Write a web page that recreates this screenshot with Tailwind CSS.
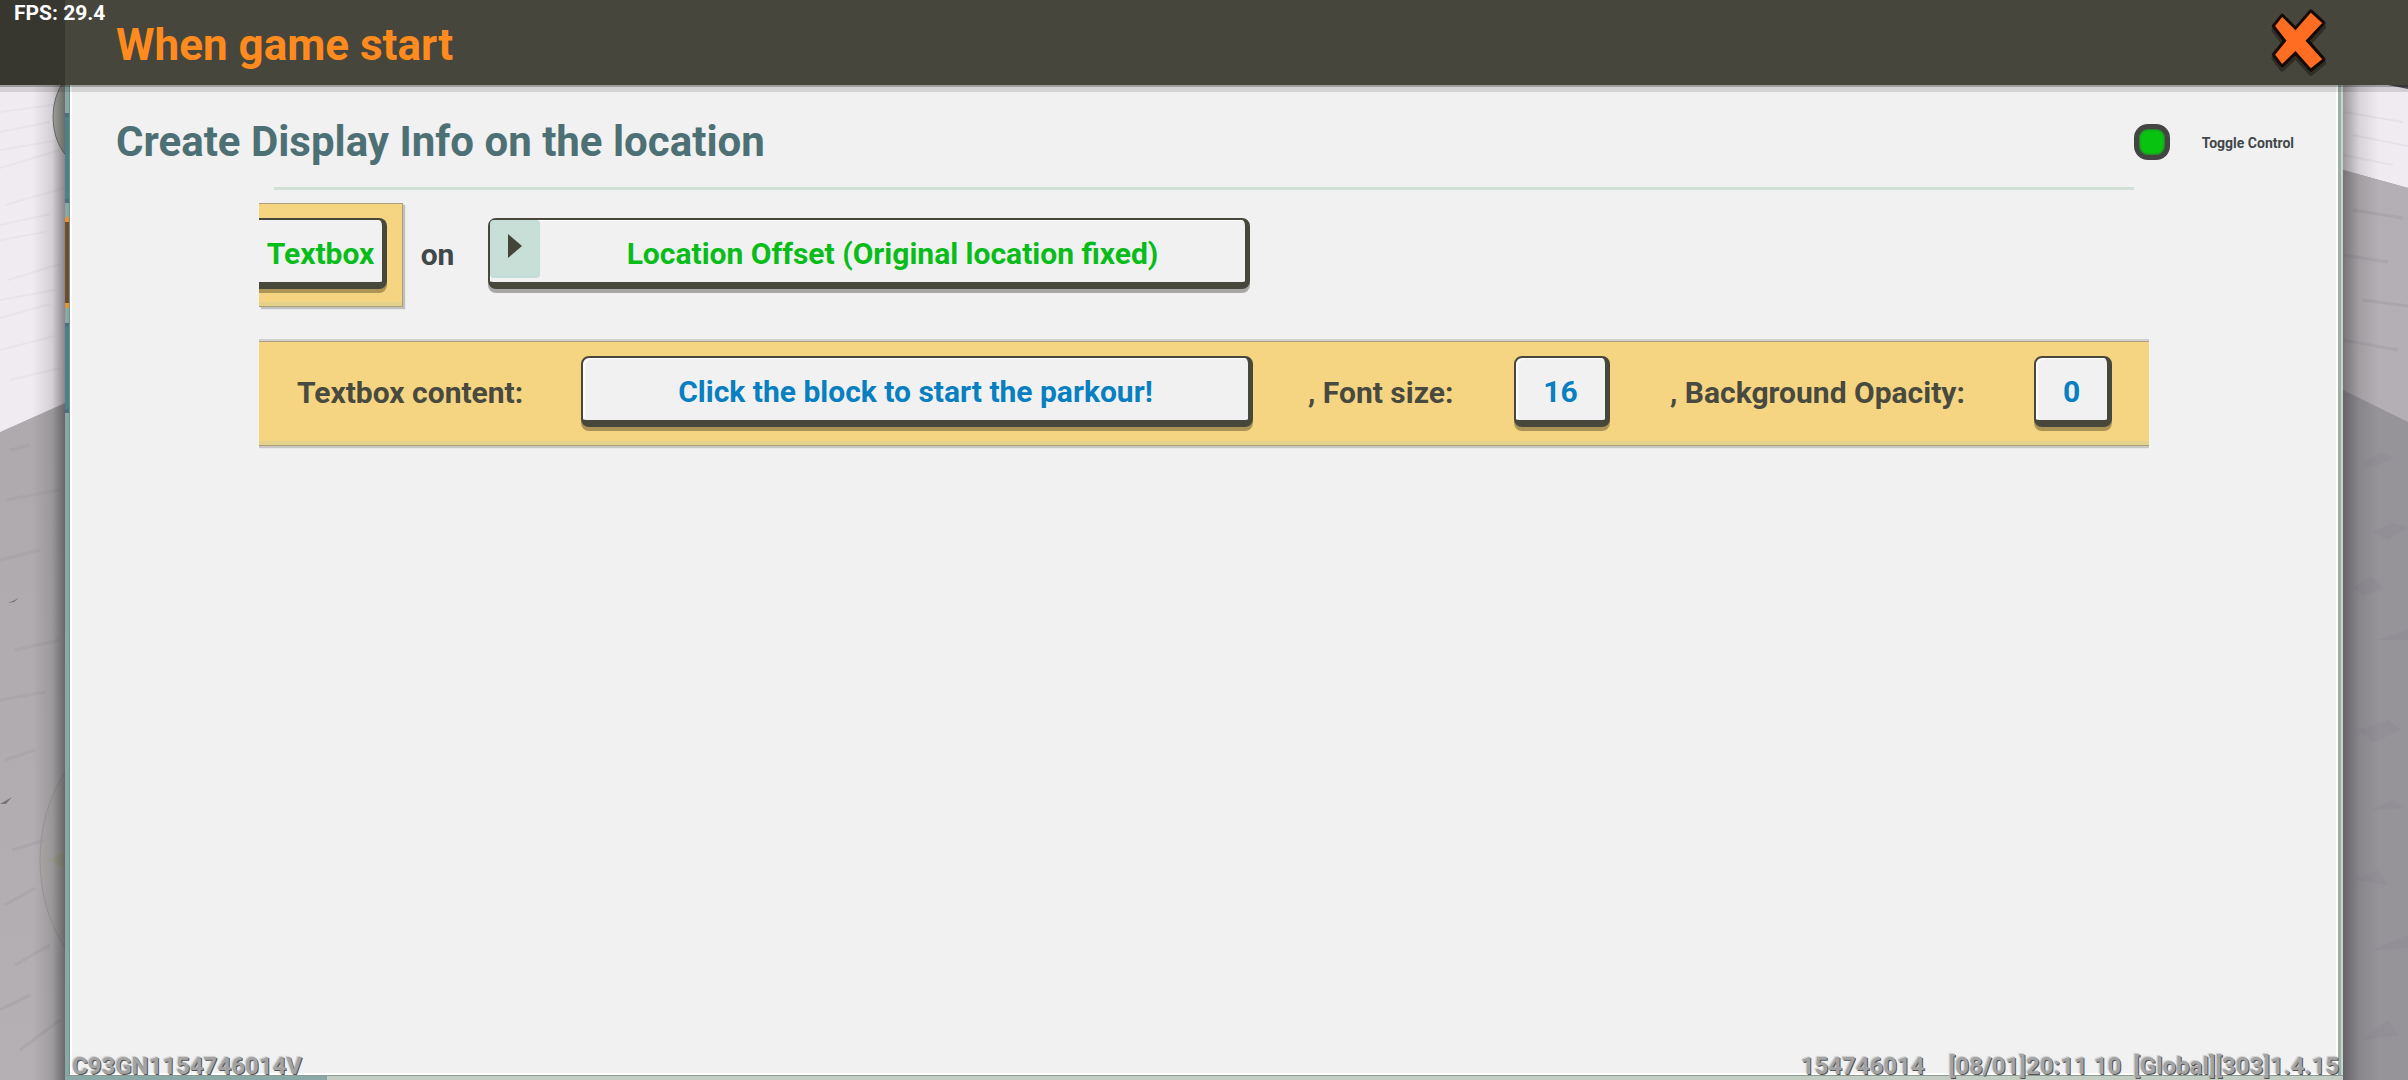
<!DOCTYPE html>
<html lang="en">
<head>
  <meta charset="UTF-8" />
  <meta name="viewport" content="width=device-width, initial-scale=1.0"/>
  <title>When game start</title>
  <script src="https://cdn.jsdelivr.net/npm/@tailwindcss/browser@4"></script>
</head>
<body class="bg-[#8f8d92] font-[Roboto,sans-serif] font-bold text-[#42474a]">
  <div class="relative min-h-screen flex flex-col">

    <!-- Title bar -->
    <header class="relative z-10 flex h-[85px] bg-[#47463c] shadow-[0_2px_0_rgba(0,0,0,0.25),0_7px_0_rgba(0,0,0,0.12)]">
      <div class="w-[65px] bg-[#37362f]"></div>
      <h1 class="flex-1 pl-[51px] pt-[17px] text-[44px] leading-[56px] text-[#ff8a1e]">When game start</h1>
      <button aria-label="Close" class="mr-[82px] mt-[7px] w-[54px] h-[70px] cursor-pointer">
        <svg viewBox="517 20 161 210" class="w-full h-full overflow-visible">
          <path d="M547 57L587 97L633 42L672 80L624 133L672 188L633 219L587 169L547 207L522 175L555 133L522 90Z" fill="#000" opacity=".35" stroke="#000" stroke-width="14" stroke-linejoin="round"/>
          <path d="M547 46L587 86L633 33L671 68L622 121L671 177L633 208L587 156L547 195L522 163L556 121L522 77Z" fill="#ff6d22" stroke="#160b04" stroke-width="12" stroke-linejoin="round"/>
          <path d="M547 50L587 90L633 37L667 68L617 121L667 177L633 204L587 152L547 191L526 163L560 121L526 77Z" fill="#ff6d22"/>
        </svg>
      </button>
      <p class="absolute left-[14px] top-0 text-[21px] leading-[26px] text-white">FPS: 29.4</p>
    </header>

    <main class="flex flex-1">
      <!-- Scenery, left -->
      <div class="w-[65px] shrink-0">
        <svg viewBox="0 85 65 995" preserveAspectRatio="none" class="w-full h-full">
          <defs>
            <linearGradient id="shadeLeft"><stop offset=".5" stop-color="#222" stop-opacity="0"/><stop offset=".8" stop-color="#222" stop-opacity=".14"/><stop offset="1" stop-color="#222" stop-opacity=".5"/></linearGradient>
            <linearGradient id="rock" x1="0" y1="0" x2="0" y2="1"><stop offset="0" stop-color="#aaa6aa"/><stop offset="1" stop-color="#b4b0b4"/></linearGradient>
          </defs>
          <rect y="85" width="65" height="995" fill="url(#rock)"/>
          <path d="M0 85H65V403L0 432Z" fill="#f0ebf1"/>
          <g stroke="#e8e4ea" stroke-width="2">
            <path d="M0 112L60 104M0 132L50 122M0 150L60 140M0 168L60 150M5 205L65 188M0 225L50 214M0 240L45 232M8 280L60 264M0 300L55 290M0 318L50 304M0 350L55 336M10 380L60 368"/>
          </g>
          <g stroke="#a5a1a6" stroke-width="3" opacity=".5">
            <path d="M10 450L30 445M5 500L60 490M0 560L40 550M15 650L60 640M0 700L45 692M5 760L35 750M12 850L45 840M5 905L35 888M15 965L50 945M0 1010L30 995M20 1050L60 1020"/>
          </g>
          <path d="M8 603L19 598L14 602ZM0 804L12 797L6 804Z" fill="#77747a"/>
          <ellipse cx="89" cy="117" rx="36" ry="50" fill="#b3b7b0" stroke="#77777a"/>
          <ellipse cx="120" cy="860" rx="80" ry="120" fill="#a5a69f" fill-opacity=".3" stroke="#8b8b84" stroke-opacity=".5"/>
          <path d="M47 860L65 852V868Z" fill="#a9aa99"/>
          <rect y="85" width="65" height="995" fill="url(#shadeLeft)"/>
        </svg>
      </div>

      <div class="flex flex-1 flex-col min-w-0">
        <div class="flex flex-1">
          <!-- Tabs peeking out behind the panel -->
          <div class="w-[5px] bg-[#8aa9a6] border-r border-[#6f908a] pt-7">
            <div class="h-[90px] bg-[#4e8086] border-y-4 border-[#4c6f7c]"></div>
            <div class="h-[91px] mt-[14px] bg-[#714b30] border-y-[5px] border-[#e59334]"></div>
            <div class="h-[90px] mt-[15px] bg-[#4e8086] border-y-4 border-[#4c6f7c]"></div>
          </div>

          <section class="relative flex-1 min-w-0 bg-[#f1f1f1] border-x-2 border-b-2 border-white">
            <div class="flex items-center justify-between pl-11 pr-[42px] pt-[29px]">
              <h2 class="text-[42px] leading-[56px] text-[#4d7074]">Create Display Info on the location</h2>
              <div class="flex items-center gap-8">
                <input id="toggle" type="checkbox" checked class="appearance-none size-9 rounded-[14px] border-[5px] border-[#444543] bg-[#08c411] shadow-[inset_0_0_2px_1px_#287a2c] cursor-pointer">
                <label for="toggle" class="pt-[2px] text-sm leading-5">Toggle Control</label>
              </div>
            </div>
            <hr class="mx-[202px] mt-[17px] border-t-[3px] border-[#d2dfd5]">

            <div class="mx-[187px] mt-[7px] overflow-hidden text-3xl">
              <!-- What is created, and where -->
              <div class="flex items-start pt-[6px] pb-1">
                <div class="w-[144px] h-[104px] pt-[14px] pr-[15px] bg-[#f5d581] border-y border-r border-[#a99f7b] shadow-[2px_2px_1px_rgba(0,0,0,0.2),inset_0_-4px_0_#e5d28a]">
                  <button class="w-full h-[71px] pt-[5px] text-center bg-[#f1f1f1] text-[#08bd19] border-[#48473c] border-t-2 border-r-[5px] border-b-[7px] rounded-r-lg shadow-[0_4px_0_rgba(60,50,20,0.4)] cursor-pointer">Textbox</button>
                </div>
                <span class="w-[85px] pr-4 text-center leading-[104px]">on</span>
                <button class="flex w-[762px] h-[71px] mt-[15px] bg-[#f1f1f1] text-[#08bd19] border-[#48473c] border-t-2 border-l-2 border-r-[5px] border-b-[7px] rounded-lg shadow-[0_4px_0_#aaa8a6,inset_1px_1px_1px_white] cursor-pointer">
                  <span class="w-[50px] h-[58px] pl-4 pt-3 rounded-sm bg-[#c8dfd8] border-2 border-[#c4dcda]">
                    <svg viewBox="0 0 14 24" class="w-[14px] h-6 fill-[#44443a]"><path d="M0 0L14 12L0 24Z"/></svg>
                  </span>
                  <span class="flex-1 self-center pt-[5px]">Location Offset (Original location fixed)</span>
                </button>
              </div>

              <!-- Textbox settings -->
              <form class="flex h-[105px] mt-[30px] mb-1 pt-[14px] pr-[37px] bg-[#f5d581] border-y border-[#a99f7b] shadow-[0_-2px_0_#d2d1cf,0_2px_1px_#c8c7c3,inset_0_-4px_0_#e5d28a] text-[#48493f]">
                <label for="content" class="w-[322px] pl-[38px] leading-[73px]">Textbox content:</label>
                <input id="content" type="text" value="Click the block to start the parkour!" class="flex-1 min-w-0 h-[71px] pt-[5px] text-center bg-[#f1f1f1] text-[#087fc0] border-[#48473c] border-t-2 border-l-2 border-r-[5px] border-b-[7px] rounded-lg shadow-[0_4px_0_rgba(60,50,20,0.4),inset_2px_1px_2px_white]">
                <label for="fontSize" class="w-[261px] pl-[55px] leading-[73px]">, Font size:</label>
                <input id="fontSize" type="text" value="16" class="w-[96px] h-[71px] pt-[5px] text-center bg-[#f1f1f1] text-[#087fc0] border-[#48473c] border-t-2 border-l-2 border-r-[5px] border-b-[7px] rounded-lg shadow-[0_4px_0_rgba(60,50,20,0.4),inset_2px_1px_2px_white]">
                <label for="opacity" class="w-[424px] pl-[60px] leading-[73px]">, Background Opacity:</label>
                <input id="opacity" type="text" value="0" class="w-[78px] h-[71px] pt-[5px] text-center bg-[#f1f1f1] text-[#087fc0] border-[#48473c] border-t-2 border-l-2 border-r-[5px] border-b-[7px] rounded-lg shadow-[0_4px_0_rgba(60,50,20,0.4),inset_2px_1px_2px_white]">
              </form>
            </div>
          </section>

          <div class="w-[5px] bg-[#9db0a4] border-r-2 border-[#c5d6cb]"></div>
        </div>
        <div class="flex h-[5px] bg-[#c4cdc4] border-t border-[#8e9b92]">
          <div class="w-[262px] bg-[#8aa9a6]"></div>
        </div>
      </div>

      <!-- Scenery, right -->
      <div class="w-[65px] shrink-0">
        <svg viewBox="0 85 65 995" preserveAspectRatio="none" class="w-full h-full">
          <defs>
            <linearGradient id="shadeRight"><stop offset="0" stop-color="#222" stop-opacity=".42"/><stop offset=".25" stop-color="#222" stop-opacity=".12"/><stop offset=".55" stop-color="#222" stop-opacity="0"/></linearGradient>
          </defs>
          <rect y="85" width="65" height="995" fill="#969399"/>
          <path d="M0 85H65V188L0 170Z" fill="#f0ebf1"/>
          <path d="M0 170L65 188V422L0 390Z" fill="#b3afb4"/>
          <path d="M45 85H65V89Z" fill="#55545a"/>
          <path d="M0 112L60 122M10 135L65 146M0 155L50 165" stroke="#e6e1e8" stroke-width="2"/>
          <path d="M10 210L60 218M0 255L45 262M20 300L65 306M0 340L55 350" stroke="#aaa6ab" stroke-width="3"/>
          <g fill="#8c8a90" opacity=".4">
            <path d="M20 463L38 452L50 458L28 468ZM30 532L50 523L65 528L45 540ZM10 588L28 576L40 588L20 596ZM35 640L65 630V640ZM15 730L45 720L58 730L30 742ZM28 810L50 800L60 808ZM12 880L35 870L45 885ZM30 950L65 935V948ZM20 1040L45 1020L55 1035Z"/>
          </g>
          <rect y="85" width="65" height="995" fill="url(#shadeRight)"/>
        </svg>
      </div>
    </main>

    <!-- Build and session watermark -->
    <footer class="absolute bottom-0 inset-x-0 flex px-[69px] pl-[72px] text-2xl leading-7 text-[#a3a3a3] [text-shadow:1px_1px_0_#555,-1px_-1px_1px_#ccc] whitespace-pre pointer-events-none">
      <span class="flex-1">C93GN1154746014V</span>
      <span class="mr-6">154746014</span>
      <span>[08/01]20:11 10  [Global][303]1.4.15</span>
    </footer>
  </div>
</body>
</html>
